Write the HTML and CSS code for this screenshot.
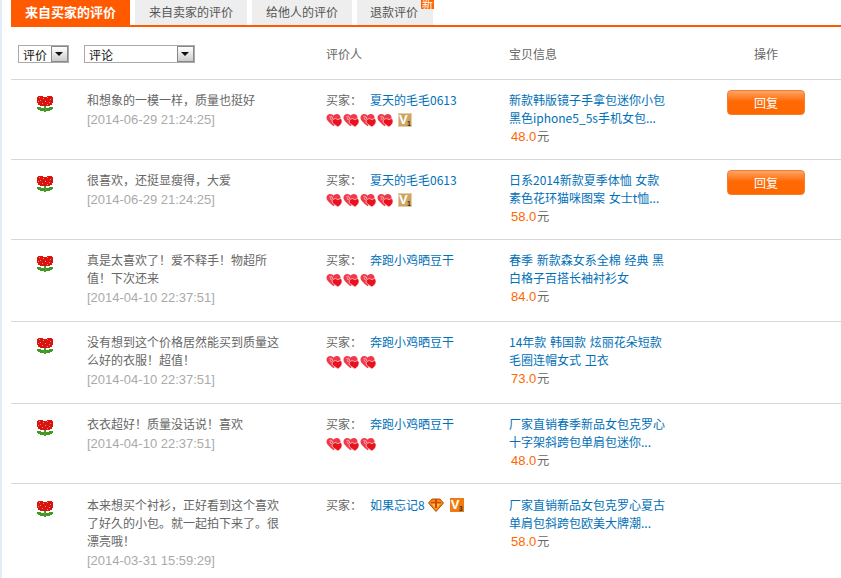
FILE: index.html
```html
<!DOCTYPE html>
<html lang="zh">
<head>
<meta charset="utf-8">
<title>评价</title>
<link rel="stylesheet" href="styles.css">
</head>
<body>
<svg class="defs" width="0" height="0">
  <symbol id="heart" viewBox="0 0 17 15">
    <path d="M.5 4.500C.5 2 2.500.5 4.500.5c1.500 0 3 .8 3.500 2C8.700 1.300 10 .5 11.500.5c2.200 0 4 1.700 4 4 0 3-3.500 5.500-7.500 9C4 10 .5 7.500.5 4.500z" fill="#f0384a"/>
    <path d="M6.500 9c0-2 1.500-3.500 3.500-3.500 1.200 0 2.200.6 2.700 1.500.5-.9 1.500-1.500 2.300-1.500 1.300 0 2 1.500 2 3.200 0 2-1.800 3.600-4.300 5.800C10 12 6.500 11 6.500 9z" fill="#e8121c" stroke="#ffd8dc" stroke-width=".8"/>
    <path d="M3.500 3.500c1.500-1 3.500-.5 3.500 1.500S4.500 7 4.500 5.500 6 4 6 4" fill="none" stroke="#ffc4c8" stroke-width=".8"/>
  </symbol>
  <symbol id="flower" viewBox="0 0 16 16">
    <g shape-rendering="crispEdges">
      <path d="M1 0h5v1h4V0h5v1h1v6h-1v2h-2v1H3V9H1V7H0V1h1z" fill="#d81410"/>
      <path d="M2 1h1v1H2zM6 2h1v1H6zM10 1h1v1h-1zM13 3h1v1h-1zM3 4h1v1H3zM8 5h1v1H8zM12 6h1v1h-1zM5 7h1v1H5zM1 5h1v1H1zM10 8h1v1h-1z" fill="#ff8a7a"/>
      <path d="M7 10h2v6H7z" fill="#4f9a2c"/>
      <path d="M0 11h4v1h3v3H3v-1H1v-1H0zM16 11h-4v1H9v3h4v-1h2v-1h1z" fill="#3f9a25"/>
    </g>
  </symbol>
  <symbol id="diamond" viewBox="0 0 16 14">
    <path d="M4 1h8l3.500 4L8 13.500.5 5z" fill="#f08a12" stroke="#b8500c" stroke-width="1"/>
    <path d="M3 5h10L8 11z" fill="#ffc832"/>
    <path d="M7 1h2v9H7z" fill="#d84010"/>
    <path d="M3 4h10v1.500H3z" fill="#d84010"/>
  </symbol>
</svg>

<main class="page">
  <nav class="tabs">
    <a class="tab tab-active">来自买家的评价</a>
    <a class="tab tab-seller">来自卖家的评价</a>
    <a class="tab tab-given">给他人的评价</a>
    <a class="tab tab-refund">退款评价<span class="new-badge">新</span></a>
  </nav>

  <section class="table">
    <div class="row head">
      <div class="filters">
        <span class="select select-rate"><span class="select-text">评价</span><span class="select-btn"></span></span>
        <span class="select select-comment"><span class="select-text">评论</span><span class="select-btn"></span></span>
      </div>
      <div class="c-user">评价人</div>
      <div class="c-item">宝贝信息</div>
      <div class="c-op">操作</div>
    </div>

    <article class="row">
      <div class="c-icon"><svg class="flower"><use href="#flower"/></svg></div>
      <div class="c-comment"><p>和想象的一模一样，质量也挺好</p><p class="date">[2014-06-29 21:24:25]</p></div>
      <div class="c-user">
        <p class="buyer"><span class="lab">买家：</span><a class="link">夏天的毛毛0613</a></p>
        <p class="marks"><svg class="heart"><use href="#heart"/></svg><svg class="heart"><use href="#heart"/></svg><svg class="heart"><use href="#heart"/></svg><svg class="heart"><use href="#heart"/></svg><span class="vip vip-gold"><i>V</i><b>1</b></span></p>
      </div>
      <div class="c-item"><p class="item-name"><a class="link">新款韩版镜子手拿包迷你小包<br>黑色iphone5_5s手机女包...</a></p><p class="price"><span class="num">48.0</span>元</p></div>
      <div class="c-op"><button class="reply">回复</button></div>
    </article>

    <article class="row">
      <div class="c-icon"><svg class="flower"><use href="#flower"/></svg></div>
      <div class="c-comment"><p>很喜欢，还挺显瘦得，大爱</p><p class="date">[2014-06-29 21:24:25]</p></div>
      <div class="c-user">
        <p class="buyer"><span class="lab">买家：</span><a class="link">夏天的毛毛0613</a></p>
        <p class="marks"><svg class="heart"><use href="#heart"/></svg><svg class="heart"><use href="#heart"/></svg><svg class="heart"><use href="#heart"/></svg><svg class="heart"><use href="#heart"/></svg><span class="vip vip-gold"><i>V</i><b>1</b></span></p>
      </div>
      <div class="c-item"><p class="item-name"><a class="link">日系2014新款夏季体恤 女款<br>素色花环猫咪图案 女士t恤...</a></p><p class="price"><span class="num">58.0</span>元</p></div>
      <div class="c-op"><button class="reply">回复</button></div>
    </article>

    <article class="row">
      <div class="c-icon"><svg class="flower"><use href="#flower"/></svg></div>
      <div class="c-comment"><p>真是太喜欢了！爱不释手！物超所<br>值！下次还来</p><p class="date">[2014-04-10 22:37:51]</p></div>
      <div class="c-user">
        <p class="buyer"><span class="lab">买家：</span><a class="link">奔跑小鸡晒豆干</a></p>
        <p class="marks"><svg class="heart"><use href="#heart"/></svg><svg class="heart"><use href="#heart"/></svg><svg class="heart"><use href="#heart"/></svg></p>
      </div>
      <div class="c-item"><p class="item-name"><a class="link">春季 新款森女系全棉 经典 黑<br>白格子百搭长袖衬衫女</a></p><p class="price"><span class="num">84.0</span>元</p></div>
      <div class="c-op"></div>
    </article>

    <article class="row">
      <div class="c-icon"><svg class="flower"><use href="#flower"/></svg></div>
      <div class="c-comment"><p>没有想到这个价格居然能买到质量这<br>么好的衣服！超值！</p><p class="date">[2014-04-10 22:37:51]</p></div>
      <div class="c-user">
        <p class="buyer"><span class="lab">买家：</span><a class="link">奔跑小鸡晒豆干</a></p>
        <p class="marks"><svg class="heart"><use href="#heart"/></svg><svg class="heart"><use href="#heart"/></svg><svg class="heart"><use href="#heart"/></svg></p>
      </div>
      <div class="c-item"><p class="item-name"><a class="link">14年款 韩国款 炫丽花朵短款<br>毛圈连帽女式 卫衣</a></p><p class="price"><span class="num">73.0</span>元</p></div>
      <div class="c-op"></div>
    </article>

    <article class="row">
      <div class="c-icon"><svg class="flower"><use href="#flower"/></svg></div>
      <div class="c-comment"><p>衣衣超好！质量没话说！喜欢</p><p class="date">[2014-04-10 22:37:51]</p></div>
      <div class="c-user">
        <p class="buyer"><span class="lab">买家：</span><a class="link">奔跑小鸡晒豆干</a></p>
        <p class="marks"><svg class="heart"><use href="#heart"/></svg><svg class="heart"><use href="#heart"/></svg><svg class="heart"><use href="#heart"/></svg></p>
      </div>
      <div class="c-item"><p class="item-name"><a class="link">厂家直销春季新品女包克罗心<br>十字架斜跨包单肩包迷你...</a></p><p class="price"><span class="num">48.0</span>元</p></div>
      <div class="c-op"></div>
    </article>

    <article class="row row-last">
      <div class="c-icon"><svg class="flower"><use href="#flower"/></svg></div>
      <div class="c-comment"><p>本来想买个衬衫，正好看到这个喜欢<br>了好久的小包。就一起拍下来了。很<br>漂亮哦！</p><p class="date">[2014-03-31 15:59:29]</p></div>
      <div class="c-user">
        <p class="buyer"><span class="lab">买家：</span><a class="link">如果忘记8</a><svg class="diamond"><use href="#diamond"/></svg><span class="vip vip-orange"><i>V</i><b>3</b></span></p>
      </div>
      <div class="c-item"><p class="item-name"><a class="link">厂家直销新品女包克罗心夏古<br>单肩包斜跨包欧美大牌潮...</a></p><p class="price"><span class="num">58.0</span>元</p></div>
      <div class="c-op"></div>
    </article>
  </section>
</main>
</body>
</html>
```

FILE: styles.css
```css
* { box-sizing: border-box; }
html, body { margin: 0; padding: 0; }
body {
  width: 841px;
  height: 578px;
  overflow: hidden;
  border-left: 2px solid #e2edfa;
  background: #fff;
  color: #666;
  font-family: "Noto Sans CJK SC", "Liberation Sans", sans-serif;
  font-size: 12px;
  line-height: 18px;
}
p { margin: 0; }
.defs { position: absolute; }
.page { padding-left: 9px; }

.tabs {
  display: flex;
  gap: 5px;
  height: 27px;
  border-bottom: 2px solid #ff5a00;
}
.tab {
  position: relative;
  display: block;
  height: 25px;
  background: #eee;
  color: #555;
  line-height: 23px;
  text-align: center;
}
.tab-active { width: 119px; background: #ff5a00; color: #fff; font-weight: 700; font-size: 13px; }
.tab-seller { width: 112px; }
.tab-given { width: 100px; }
.tab-refund { width: 76px; text-align: left; padding-left: 13px; }
.new-badge {
  position: absolute;
  left: 64px;
  top: 0;
  width: 13px;
  height: 9px;
  overflow: hidden;
  background: #f60;
  color: #fff;
  font-size: 11px;
  line-height: 7px;
  text-align: center;
}

.row {
  display: grid;
  grid-template-columns: 76px 239px 183px 215px 84px;
  min-height: 80px;
  border-bottom: 1px solid #d8d8d8;
  padding-top: 11px;
}
.row.head {
  grid-template-columns: 315px 183px 215px 84px;
  height: 53px;
  min-height: 0;
  padding-top: 18px;
}
.row-last { padding-top: 12px; }

.filters { display: flex; gap: 15px; padding-left: 7px; }
.select {
  display: flex;
  justify-content: space-between;
  height: 18px;
  border: 1px solid #aaa;
  background: #fff;
  color: #111;
  line-height: 17px;
}
.select-rate { width: 51px; }
.select-comment { width: 111px; }
.select-text { padding-left: 4px; }
.select-btn {
  position: relative;
  width: 17px;
  height: 16px;
  border: 1px solid #888;
  background: linear-gradient(#fff, #ccc);
}
.select-btn::after {
  content: "";
  position: absolute;
  left: 3px;
  top: 5px;
  border: 4px solid transparent;
  border-top-color: #111;
  border-bottom-width: 0;
}

.c-icon { padding-left: 26px; }
.flower { display: block; width: 16px; height: 16px; margin-top: 5px; }
.c-comment { padding-bottom: 14px; font-family: "Noto Sans CJK TC", "Liberation Sans", sans-serif; }
.date { margin-top: 2px; color: #aaa; font-family: "Liberation Sans", sans-serif; font-size: 13px; line-height: 18px; }
.c-op { text-align: center; }
.link { color: #0070b8; }
.buyer { display: flex; align-items: center; height: 18px; }
.lab { width: 44px; font-family: "Noto Sans CJK TC", sans-serif; }
.marks { display: flex; align-items: center; height: 18px; margin-top: 2px; }
.heart { display: block; width: 16px; height: 15px; margin-right: 1px; }
.diamond { width: 16px; height: 14px; margin-left: 3px; }
.vip {
  position: relative;
  display: block;
  width: 14px;
  height: 14px;
  margin-left: 4px;
  overflow: hidden;
  color: #fff;
  font-family: "Liberation Sans", sans-serif;
  line-height: 14px;
}
.vip-gold { background: #cfa565; box-shadow: inset 0 0 0 1px #e4cda0; }
.vip-orange { margin-left: 6px; background: #f07c10; }
.vip i { position: absolute; left: 1px; top: 0; font-size: 13px; font-style: normal; font-weight: 700; }
.vip b { position: absolute; right: 1px; bottom: -1px; font-size: 7px; font-weight: 700; line-height: 8px; color: #333; }
.item-name { line-height: 18px; word-spacing: 1px; }
.price { line-height: 17px; padding-left: 2px; }
.num { color: #f60; font-family: "Liberation Sans", sans-serif; font-size: 13px; margin-right: 1px; }

.reply {
  display: block;
  width: 78px;
  height: 25px;
  margin: -1px auto 0;
  padding: 0;
  border: 1px solid #f08030;
  border-radius: 4px;
  background: linear-gradient(#ffa566, #ff6a05 45%, #ff6600);
  color: #fff;
  font: inherit;
  line-height: 23px;
}
```
